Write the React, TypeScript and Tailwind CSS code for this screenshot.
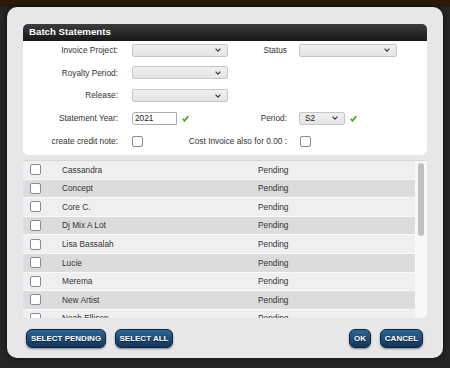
import * as React from "react";

const ARTISTS = [
  "Cassandra",
  "Concept",
  "Core C.",
  "Dj Mix A Lot",
  "Lisa Bassalah",
  "Lucie",
  "Merema",
  "New Artist",
  "Noah Ellison",
];

function Chevron() {
  return (
    <svg width="6" height="4" viewBox="0 0 6 4" className="shrink-0">
      <polyline points="0.6,0.7 3,3.1 5.4,0.7" fill="none" stroke="#333" strokeWidth="1.1" />
    </svg>
  );
}

function Select({ width, value }: { width: string; value?: string }) {
  return (
    <div
      className={`${width} flex h-[13px] items-center justify-between rounded-[2px] border border-[#c6c6c6] bg-gradient-to-b from-[#f0f0f0] to-[#e4e4e4] pl-[5px] pr-[6px] text-[8.3px] leading-none text-[#222]`}
    >
      <span>{value ?? ""}</span>
      <Chevron />
    </div>
  );
}

function Check() {
  return (
    <svg width="7" height="7" viewBox="0 0 8 8" className="ml-[5px] shrink-0">
      <path d="M0.8 4.4 L3 6.6 L7.2 1.2" fill="none" stroke="#35a81c" strokeWidth="1.8" />
    </svg>
  );
}

function Box() {
  return <span className="block h-[11px] w-[11px] shrink-0 rounded-[2px] border border-[#8d879b] bg-white" />;
}

function Row({
  label,
  children,
  label2,
  children2,
}: {
  label: string;
  children: React.ReactNode;
  label2?: string;
  children2?: React.ReactNode;
}) {
  return (
    <div className="flex h-[18px] items-center">
      <div className="w-[95px] shrink-0 text-right">{label}</div>
      <div className="ml-[14px] flex w-[96px] shrink-0 items-center">{children}</div>
      <div className="flex w-[59px] shrink-0 justify-end">
        <span className="whitespace-nowrap">{label2 ?? ""}</span>
      </div>
      <div className="ml-[12px] flex items-center">{children2}</div>
    </div>
  );
}

function Button({ children, width }: { children: React.ReactNode; width: string }) {
  return (
    <button
      className={`${width} flex h-[19px] items-center justify-center rounded-[6px] border border-[#0b2640] bg-gradient-to-b from-[#2f6594] to-[#123659] text-[8px] font-bold leading-none text-white shadow-[0_1px_2px_rgba(0,0,0,0.45)] [text-shadow:0_1px_1px_rgba(0,0,0,0.6)]`}
    >
      {children}
    </button>
  );
}

export default function App() {
  return (
    <div className="relative flex h-[368px] w-[450px] flex-col overflow-hidden bg-[#1c1c1c] font-['Liberation_Sans',Arial,sans-serif]">
      {/* page behind the modal */}
      <div className="h-[7px] shrink-0 bg-[#2a1b08]" />
      <div className="flex flex-1 bg-[#262626]" />

      {/* modal */}
      <div className="absolute left-[7px] top-[7px] flex h-[351px] w-[436px] flex-col rounded-[10px] bg-[#e7e7e9] px-[16px] pt-[17px] shadow-[0_0_6px_rgba(0,0,0,0.7)]">
        {/* form panel */}
        <div className="flex flex-col rounded-[6px] bg-white text-[8.3px] text-[#333]">
          <div className="flex h-[17px] items-center rounded-t-[5px] bg-gradient-to-b from-[#3d3d3d] to-[#181818] pl-[6px] text-[9.7px] font-bold text-white">
            Batch Statements
          </div>
          <div className="flex flex-col gap-[4.75px] pb-[5px]">
            <Row label="Invoice Project:" label2="Status" children2={<Select width="w-[98px]" />}>
              <Select width="w-[96px]" />
            </Row>
            <Row label="Royalty Period:">
              <Select width="w-[96px]" />
            </Row>
            <Row label="Release:">
              <Select width="w-[96px]" />
            </Row>
            <Row
              label="Statement Year:"
              label2="Period:"
              children2={
                <>
                  <Select width="w-[46px]" value="S2" />
                  <Check />
                </>
              }
            >
              <div className="flex h-[13px] w-[45px] items-center rounded-l-[3px] border border-[#adadad] bg-white pl-[2px] text-[8.3px] text-[#222]">
                2021
              </div>
              <Check />
            </Row>
            <Row label="create credit note:" label2="Cost Invoice also for 0.00 :" children2={<span className="ml-[1px]"><Box /></span>}>
              <Box />
            </Row>
          </div>
        </div>

        {/* artist list */}
        <div className="mt-[5px] flex h-[158px] overflow-hidden rounded-b-[5px] border-t border-[#d6d6d6] bg-[#f8f8f8] text-[8.3px] text-[#333]">
          <div className="flex flex-1 flex-col">
            {ARTISTS.map((name, i) => (
              <div
                key={name}
                className={`flex h-[18.6px] shrink-0 items-center border-b border-[#f9f9f9] ${
                  i % 2 === 0 ? "bg-[#efefef]" : "bg-[#dcdcdc]"
                }`}
              >
                <span className="ml-[7px]">
                  <Box />
                </span>
                <span className="ml-[21px] w-[196px]">{name}</span>
                <span>Pending</span>
              </div>
            ))}
          </div>
          <div className="w-[12px] shrink-0 pl-[3px] pt-[2px]">
            <div className="h-[73px] w-[6px] rounded-[3px] bg-[#c1c1c1]" />
          </div>
        </div>

        {/* buttons */}
        <div className="mt-[11px] flex items-center pl-[3px] pr-[4px]">
          <Button width="w-[80px]">SELECT PENDING</Button>
          <div className="ml-[9px]">
            <Button width="w-[58px]">SELECT ALL</Button>
          </div>
          <div className="ml-auto flex gap-[9px]">
            <Button width="w-[22px]">OK</Button>
            <Button width="w-[43px]">CANCEL</Button>
          </div>
        </div>
      </div>
    </div>
  );
}
